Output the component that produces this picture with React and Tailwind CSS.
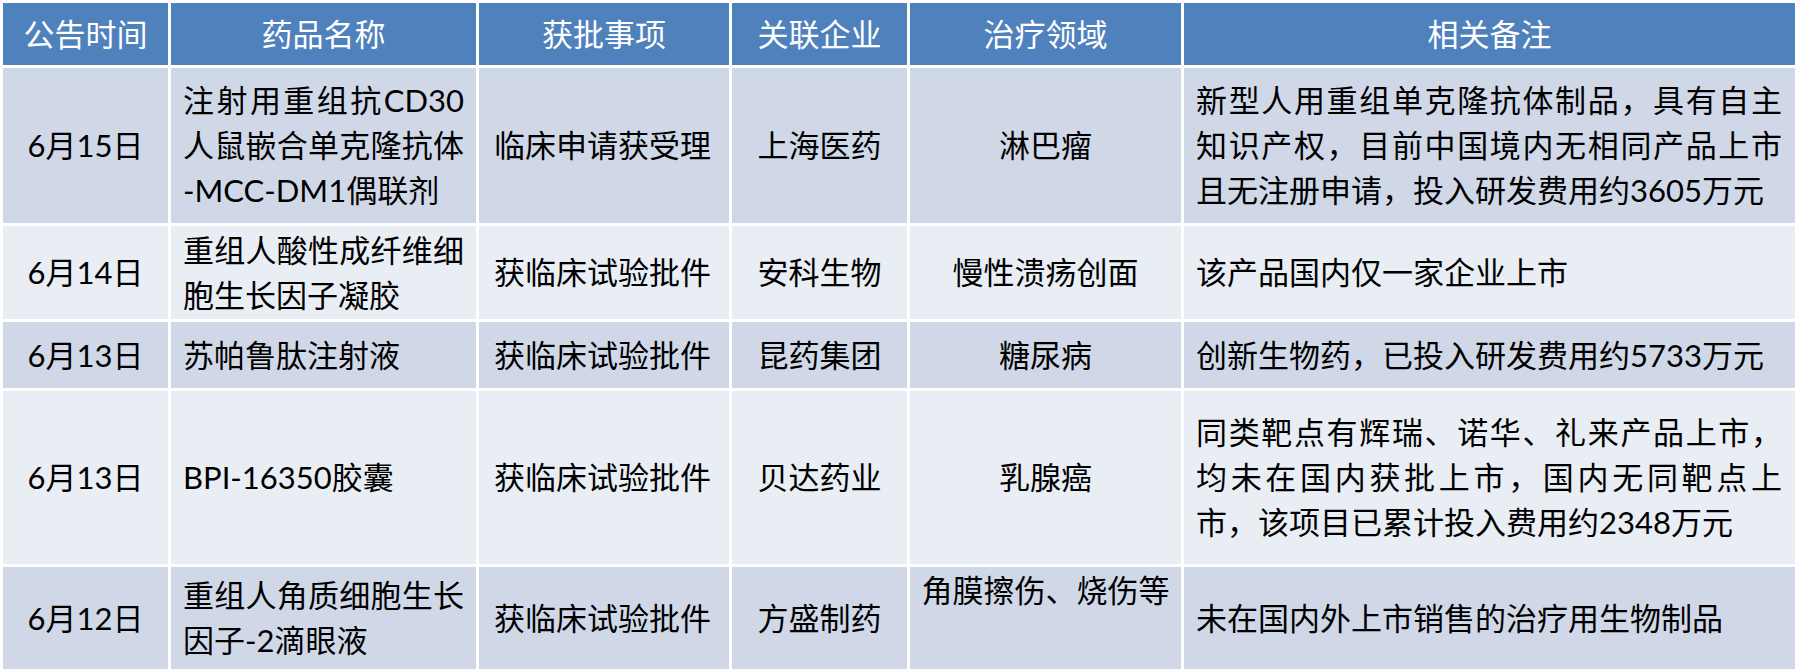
import React from "react";

const rows = [
  {
    date: "6月15日",
    name: "注射用重组抗CD30人鼠嵌合单克隆抗体\u200B-MCC-DM1偶联剂",
    item: "临床申请获受理",
    company: "上海医药",
    area: "淋巴瘤",
    note: "新型人用重组单克隆抗体制品，具有自主知识产权，目前中国境内无相同产品上市且无注册申请，投入研发费用约3605万元",
    dark: true,
  },
  {
    date: "6月14日",
    name: "重组人酸性成纤维细胞生长因子凝胶",
    item: "获临床试验批件",
    company: "安科生物",
    area: "慢性溃疡创面",
    note: "该产品国内仅一家企业上市",
    dark: false,
  },
  {
    date: "6月13日",
    name: "苏帕鲁肽注射液",
    item: "获临床试验批件",
    company: "昆药集团",
    area: "糖尿病",
    note: "创新生物药，已投入研发费用约5733万元",
    dark: true,
  },
  {
    date: "6月13日",
    name: "BPI-16350胶囊",
    item: "获临床试验批件",
    company: "贝达药业",
    area: "乳腺癌",
    note: "同类靶点有辉瑞、诺华、礼来产品上市，均未在国内获批上市，国内无同靶点上市，该项目已累计投入费用约2348万元",
    dark: false,
  },
  {
    date: "6月12日",
    name: "重组人角质细胞生长因子-2滴眼液",
    item: "获临床试验批件",
    company: "方盛制药",
    area: "角膜擦伤、烧伤等",
    areaTop: true,
    note: "未在国内外上市销售的治疗用生物制品",
    dark: true,
  },
];

const headers = ["公告时间", "药品名称", "获批事项", "关联企业", "治疗领域", "相关备注"];

export default function App() {
  return (
    <div
      lang="zh-CN"
      className="w-[1798px] h-[672px] bg-white p-[3px] font-[Lato,'Noto_Sans_CJK_SC',sans-serif] text-[31px] leading-[45px] text-black"
    >
      <div className="grid grid-cols-[165px_305px_250px_175px_271px_611px] grid-rows-[62px_155px_93px_66px_173px_102px] gap-[3px]">
        {headers.map((h) => (
          <div
            key={h}
            className="bg-[#4f81bd] text-white flex items-center justify-center"
          >
            {h}
          </div>
        ))}
        {rows.map((r, i) => {
          const bg = r.dark ? "bg-[#d0d8e8]" : "bg-[#e9edf4]";
          return (
            <React.Fragment key={i}>
              <div className={`${bg} flex items-center justify-center`}>{r.date}</div>
              <div className={`${bg} flex items-center pl-[12px] pr-[12px]`}>
                <div className="w-full text-justify">{r.name}</div>
              </div>
              <div className={`${bg} flex items-center pl-[15px]`}>{r.item}</div>
              <div className={`${bg} flex items-center justify-center`}>{r.company}</div>
              <div
                className={`${bg} flex justify-center ${r.areaTop ? "items-start pt-[1px]" : "items-center"}`}
              >
                {r.area}
              </div>
              <div className={`${bg} flex items-center pl-[12px] pr-[13px]`}>
                <div className="w-full text-justify">{r.note}</div>
              </div>
            </React.Fragment>
          );
        })}
      </div>
    </div>
  );
}
